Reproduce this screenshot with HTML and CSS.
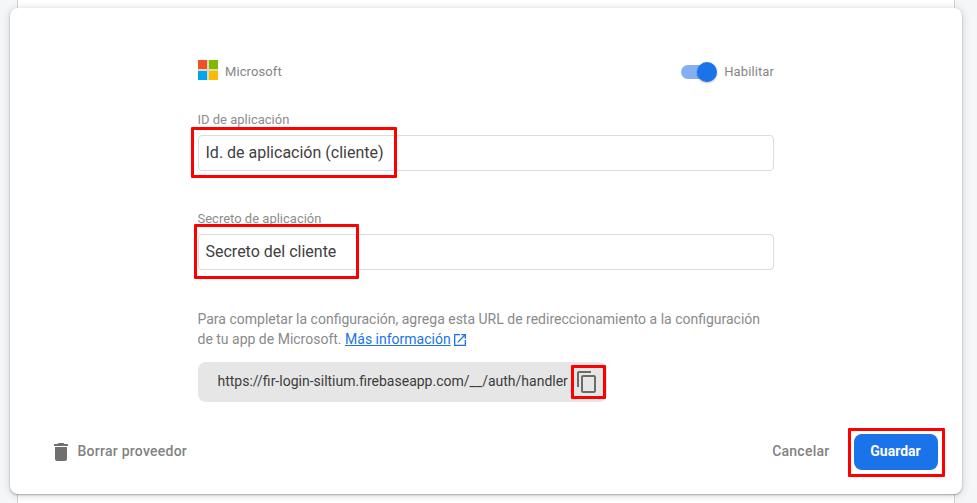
FILE: index.html
```html
<!DOCTYPE html>
<html lang="es">
<head>
<meta charset="utf-8">
<title>Microsoft</title>
<link rel="stylesheet" href="styles.css">
</head>
<body>
<div class="page">
  <div class="backdrop"></div>
  <main class="card">
    <div class="content">
      <header class="provider">
        <svg class="ms-logo" width="20" height="20" viewBox="0 0 20 20"><path fill="#d9dcc0" d="M0 0h20v20H0z"/><path fill="#f25022" d="M0 0h9v9H0z"/><path fill="#7fba00" d="M11 0h9v9h-9z"/><path fill="#00a4ef" d="M0 11h9v9H0z"/><path fill="#ffb900" d="M11 11h9v9h-9z"/></svg>
        <span class="name">Microsoft</span>
        <span class="switch"><span class="knob"></span></span>
        <span class="enable">Habilitar</span>
      </header>
      <label class="label">ID de aplicación</label>
      <div class="field"><div class="input">Id. de aplicación (cliente)</div><span class="mark mark-id"></span></div>
      <label class="label">Secreto de aplicación</label>
      <div class="field"><div class="input">Secreto del cliente</div><span class="mark mark-secret"></span></div>
      <p class="help"><span class="line1">Para completar la configuración, agrega esta URL de redireccionamiento a la configuración</span><br><span class="line2">de tu app de Microsoft.</span> <a class="link">Más información</a><svg class="external" width="16" height="16" viewBox="0 0 24 24"><path fill="#1a73e8" d="M19 19H5V5h7V3H3v18h18v-9h-2v7zM14 3v2h3.590l-9.830 9.830 1.410 1.410L19 6.410V10h2V3h-7z"/></svg></p>
      <div class="url"><span class="address">https://fir-login-siltium.firebaseapp.com/__/auth/handler</span>
        <svg class="copy" width="24" height="24" viewBox="0 0 24 24"><path fill="#6b6b6b" d="M16 1H4c-1.1 0-2 .9-2 2v14h2V3h12V1zm3 4H8c-1.1 0-2 .9-2 2v14c0 1.1.9 2 2 2h11c1.1 0 2-.9 2-2V7c0-1.1-.9-2-2-2zm0 16H8V7h11v14z"/></svg>
        <span class="mark mark-copy"></span>
      </div>
    </div>
    <footer class="actions">
      <svg class="trash" width="24" height="24" viewBox="0 0 24 24"><path fill="#707070" d="M6 19c0 1.1.9 2 2 2h8c1.1 0 2-.9 2-2V7H6v12zM19 4h-3.500l-1-1h-5l-1 1H5v2h14V4z"/></svg>
      <span class="delete">Borrar proveedor</span>
      <span class="cancel">Cancelar</span>
      <div class="save-wrap"><button class="save">Guardar</button><span class="mark mark-save"></span></div>
    </footer>
  </main>
</div>
</body>
</html>
```
FILE: styles.css
```css
* { box-sizing: border-box; }
body { margin: 0; background: #f5f6f8; font-family: Roboto, sans-serif; color: #7d7d7d; overflow: hidden; }
.page { display: grid; height: 503px; }
.backdrop { grid-area: 1 / 1; margin: 0 22px 0 17px; background: #fff; border: solid #d0d1d3; border-width: 0 1px; }
.card { grid-area: 1 / 1; margin: 8px 15px 9px 10px; background: #fff; border-radius: 8px; z-index: 1; box-shadow: 0 1px 2px rgba(60,64,67,.4), 0 1px 9px rgba(60,64,67,.2); display: flex; flex-direction: column; }
.content { width: 576px; margin-left: 188px; padding-top: 52px; flex: 1; }
.provider { display: flex; height: 24px; align-items: flex-start; font-size: 13px; line-height: 24px; letter-spacing: .1px; color: #858585; }
.name { margin-left: 7px; flex: 1; }
.switch { position: relative; width: 34px; height: 14px; margin: 5px 9px 0 0; border-radius: 7px; background: #83b0f2; }
.knob { position: absolute; left: 16px; top: -3px; width: 20px; height: 20px; border-radius: 50%; background: #1a73e8; box-shadow: 0 1px 2px rgba(0,0,0,.3); }
.label { display: block; margin-top: 27px; height: 24px; font-size: 13px; line-height: 17px; color: #8c8c8c; text-indent: -.5px; }
.field + .label { margin-top: 39px; }
.field { position: relative; height: 36px; }
.input { height: 36px; border: 1px solid #dadce0; border-radius: 4px; padding: 0 6.5px; font-size: 16px; line-height: 33px; color: #404040; }
.mark { position: absolute; border: 3px solid #f00; border-radius: 1px; pointer-events: none; }
.mark-id { left: -7px; top: -8px; width: 206px; height: 51px; }
.mark-secret { left: -4px; top: -10px; width: 165px; height: 55px; }
.help { margin: 39px 0 0 -.5px; font-size: 14px; line-height: 20px; height: 40px; white-space: nowrap; color: #8a8a8a; }
.link { color: #1a73e8; text-decoration: underline; }
.external { vertical-align: -4px; margin-left: 1px; }
.url { position: relative; display: flex; align-items: center; width: 409px; height: 40px; margin-top: 13px; padding-left: 19.5px; background: #e6e6e6; border-radius: 8px; font-size: 14px; color: #3c3c3c; white-space: nowrap; }
.address { width: 357.5px; line-height: 38px; height: 40px; }
.mark-copy { left: 373px; top: 3px; width: 35px; height: 34px; }
.actions { display: flex; align-items: center; height: 36px; margin: 0 24px 24px 39px; font-size: 14px; font-weight: 500; letter-spacing: .25px; color: #828282; }
.delete { margin-left: 4.5px; flex: 1; }
.cancel { margin-right: 24.5px; }
.delete, .cancel { line-height: 34px; height: 36px; }
.save-wrap { position: relative; width: 84px; height: 36px; }
.save { width: 84px; height: 36px; border: 0; border-radius: 8px; padding: 0 1px 2px 0; background: #1a73e8; color: #fff; font: 700 14px Roboto, sans-serif; }
.mark-save { left: -6px; top: -6px; width: 97px; height: 49px; }
```
